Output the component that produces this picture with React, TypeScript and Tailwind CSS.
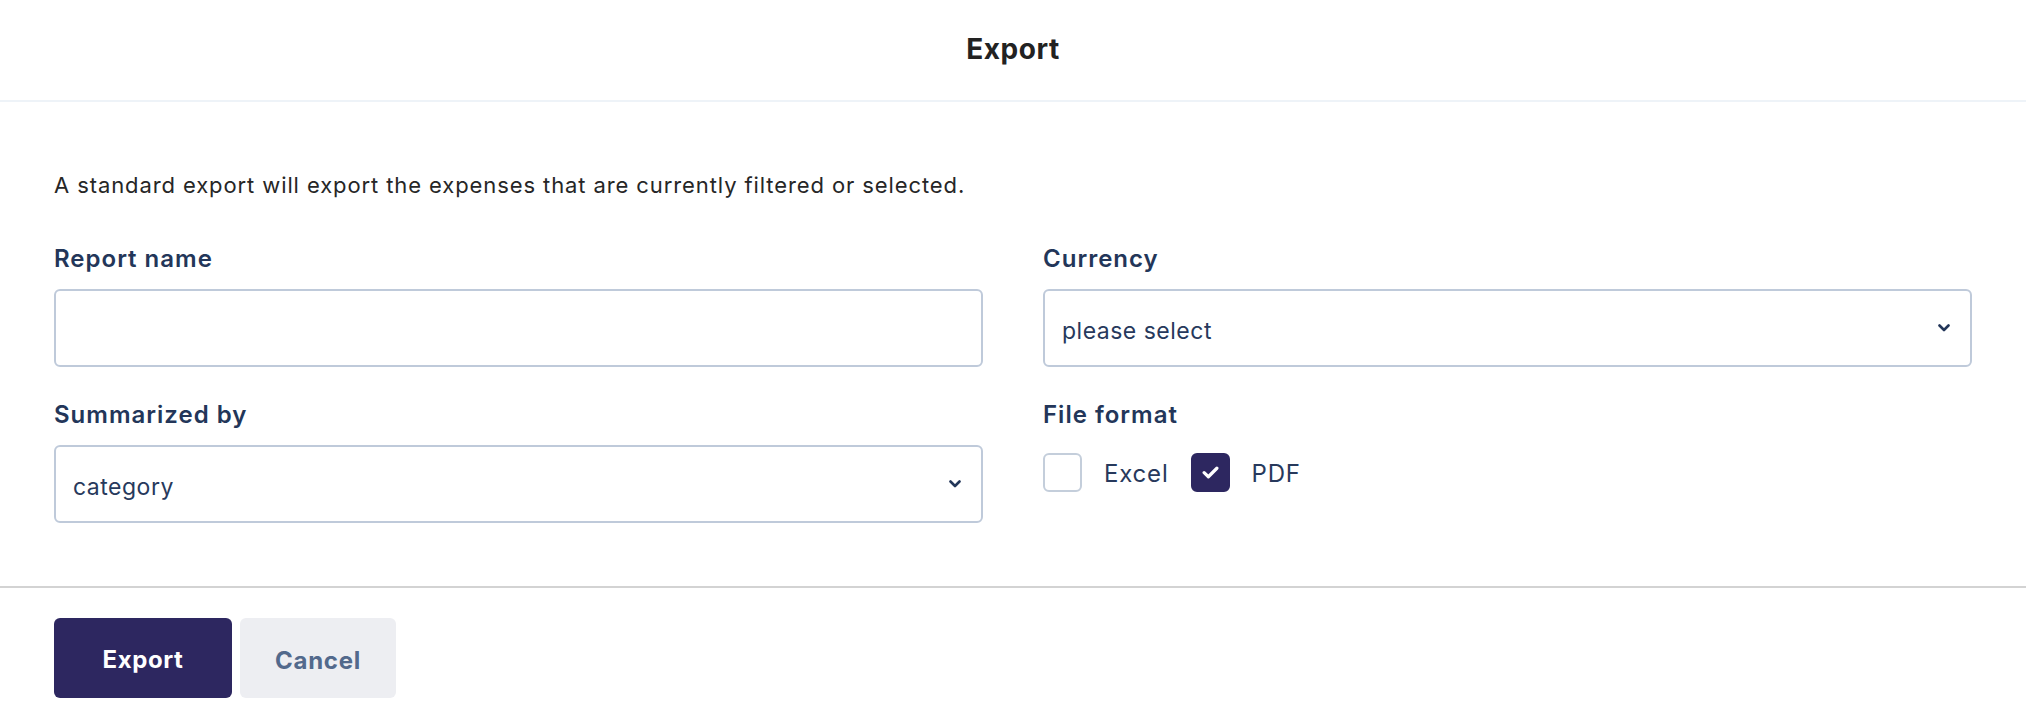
import { useState } from "react";

const labelCls = "text-[24px] leading-[32px] font-semibold tracking-[1px] text-[#233659]";
const fieldCls =
  "h-[78px] w-full rounded-[6px] border-2 border-[#bfcada] bg-white px-[17px] text-[23px] tracking-[0.5px] text-[#27395c]";

function Chevron() {
  return (
    <svg className="h-[8px] w-[12px]" viewBox="0 0 12 8" fill="none">
      <path d="M1.5 1.5 6 6l4.5-4.5" stroke="#233659" strokeWidth="2.6" strokeLinecap="round" strokeLinejoin="round" />
    </svg>
  );
}

function SelectBox({ value }: { value: string }) {
  return (
    <div className={`${fieldCls} flex items-center justify-between pr-[20px]`}>
      <span className="pt-[7px]">{value}</span>
      <Chevron />
    </div>
  );
}

function Checkbox({ label, checked, onToggle }: { label: string; checked: boolean; onToggle: () => void }) {
  return (
    <button className="flex items-center gap-[22px]" onClick={onToggle} type="button">
      <span
        className={`flex size-[39px] items-center justify-center rounded-[6px] border-2 ${
          checked ? "border-[#2d2760] bg-[#2d2760]" : "border-[#c4cedb] bg-white"
        }`}
      >
        {checked ? (
          <svg className="h-[13px] w-[17px]" viewBox="0 0 16 12" fill="none">
            <path d="M2 6.2 6 10l8-8" stroke="white" strokeWidth="3" strokeLinecap="round" strokeLinejoin="round" />
          </svg>
        ) : null}
      </span>
      <span className="pt-[4px] text-[24px] tracking-[0.8px] text-[#27395c]">{label}</span>
    </button>
  );
}

export default function App() {
  const [excel, setExcel] = useState(false);
  const [pdf, setPdf] = useState(true);

  return (
    <div className="h-[718px] w-[2026px] bg-white font-['Inter',sans-serif]">
      <header className="flex h-[102px] items-center justify-center border-b-2 border-[#eef3f8] pb-[3px]">
        <h1 className="text-[28px] font-bold tracking-[0.5px] text-[#222222]">Export</h1>
      </header>

      <div className="px-[54px] pt-[67px]">
        <p className="text-[22px] leading-[32px] tracking-[0.9px] text-[#262626]">
          A standard export will export the expenses that are currently filtered or selected.
        </p>

        <div className="mt-[42px] grid grid-cols-2 gap-x-[60px] gap-y-[32px]">
          <div className="flex flex-col gap-[14px]">
            <label className={labelCls}>Report name</label>
            <input className={`${fieldCls} outline-none`} type="text" />
          </div>
          <div className="flex flex-col gap-[14px]">
            <label className={labelCls}>Currency</label>
            <SelectBox value="please select" />
          </div>
          <div className="flex flex-col gap-[14px]">
            <label className={labelCls}>Summarized by</label>
            <SelectBox value="category" />
          </div>
          <div className="flex flex-col">
            <label className={labelCls}>File format</label>
            <div className="mt-[21px] flex items-center gap-[22px]">
              <Checkbox label="Excel" checked={excel} onToggle={() => setExcel(!excel)} />
              <Checkbox label="PDF" checked={pdf} onToggle={() => setPdf(!pdf)} />
            </div>
          </div>
        </div>
      </div>

      <footer className="mt-[63px] flex gap-[8px] border-t-2 border-[#d3d3d3] px-[54px] pt-[30px]">
        <button className="h-[80px] w-[178px] rounded-[6px] bg-[#2d2760] pt-[3px] text-[24px] font-bold tracking-[0.6px] text-white" type="button">
          Export
        </button>
        <button className="h-[80px] w-[156px] rounded-[6px] bg-[#edeef2] pt-[5px] text-[24px] font-bold tracking-[0.7px] text-[#52698c]" type="button">
          Cancel
        </button>
      </footer>
    </div>
  );
}
